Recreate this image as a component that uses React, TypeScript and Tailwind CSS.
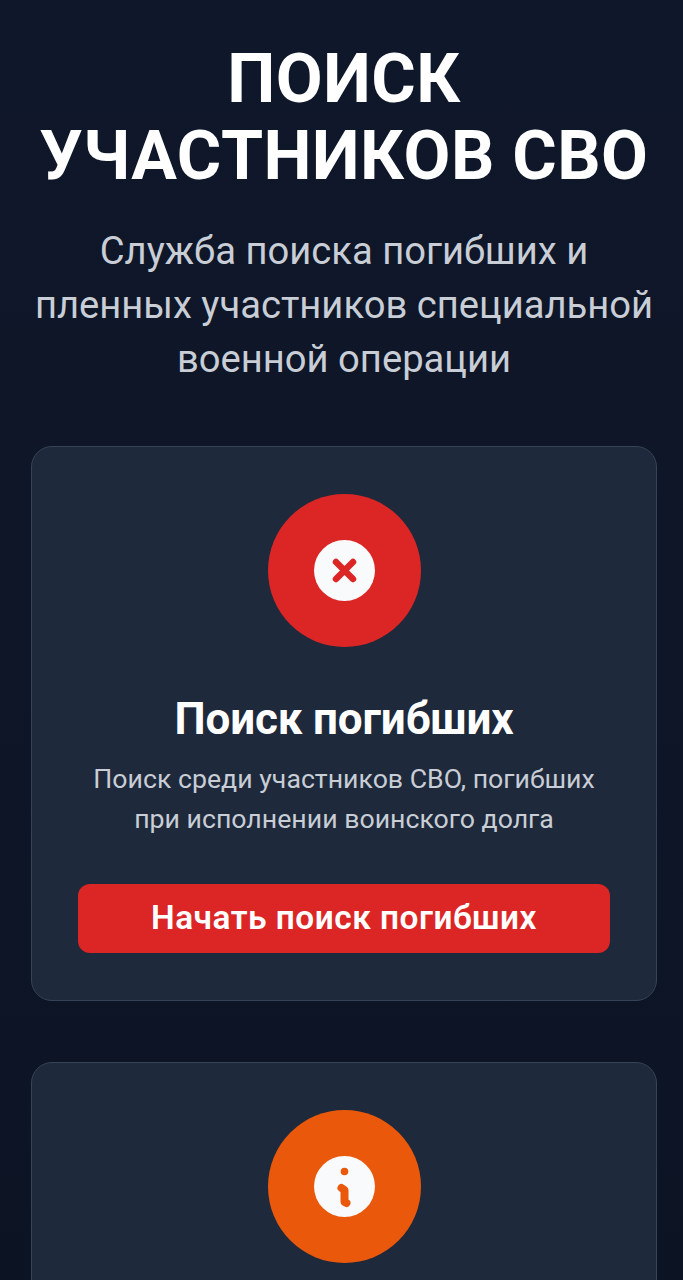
function SearchCard({
  title,
  lines,
  action,
  color,
  icon,
}: {
  title?: string;
  lines?: string[];
  action?: string;
  color: string;
  icon: React.ReactNode;
}) {
  return (
    <div className="rounded-[21px] border border-[#364256] bg-[#1e293b] px-[46px] pt-[47px] pb-[47px]">
      <div className={`mx-auto flex h-[153px] w-[153px] items-center justify-center rounded-full ${color}`}>
        {icon}
      </div>
      {title && (
        <h2 className="mt-[44px] text-center text-[44px] leading-[56px] font-bold tracking-[-0.15px] text-white">
          {title}
        </h2>
      )}
      {lines && (
        <p className="mt-[12px] -mx-[10px] text-center text-[26.7px] leading-[40px] text-[#c8cdd6]">
          {lines.map((l) => (
            <span key={l} className="block">
              {l}
            </span>
          ))}
        </p>
      )}
      {action && (
        <button className={`mt-[45px] block h-[69px] w-full rounded-[12px] text-center text-[33.4px] font-semibold tracking-[0.5px] text-white ${color}`}>
          {action}
        </button>
      )}
    </div>
  );
}

export default function App() {
  return (
    <div className="h-[1280px] overflow-hidden bg-gradient-to-b from-[#0f172a] to-[#0c1424] pr-[26px] pl-[31px] pt-[41px] font-['Roboto',sans-serif]">
      <h1 className="-mx-[10px] text-center text-[68px] leading-[77px] font-bold tracking-[0.5px] text-white">
        <span className="block">ПОИСК</span>
        <span className="block whitespace-nowrap">УЧАСТНИКОВ СВО</span>
      </h1>
      <p className="mt-[29px] -mx-[20px] text-center text-[38.2px] leading-[54px] text-[#c8cdd6]">
        <span className="block">Служба поиска погибших и</span>
        <span className="block">пленных участников специальной</span>
        <span className="block">военной операции</span>
      </p>

      <div className="mt-[60px] flex flex-col gap-[61px]">
        <SearchCard
          title="Поиск погибших"
          lines={["Поиск среди участников СВО, погибших", "при исполнении воинского долга"]}
          action="Начать поиск погибших"
          color="bg-[#dc2626]"
          icon={
            <svg width="61" height="61" viewBox="0 0 61 61">
              <circle cx="30.5" cy="30.5" r="30.5" fill="#f8fafc" />
              <path d="M22 22 L39 39 M39 22 L22 39" stroke="#dc2626" strokeWidth="6.5" strokeLinecap="round" />
            </svg>
          }
        />
        {/* second card runs off the bottom of the page, only its icon is on screen */}
        <SearchCard
          color="bg-[#ea580c]"
          icon={
            <svg width="61" height="61" viewBox="0 0 61 61">
              <circle cx="30.5" cy="30.5" r="30.5" fill="#f8fafc" />
              <circle cx="30.5" cy="15.5" r="3.8" fill="#ea580c" />
              <path d="M27.5 32 L30.5 34 L30.5 46 L32.5 47" fill="none" stroke="#ea580c" strokeWidth="8" strokeLinecap="round" strokeLinejoin="round" />
            </svg>
          }
        />
      </div>
    </div>
  );
}
